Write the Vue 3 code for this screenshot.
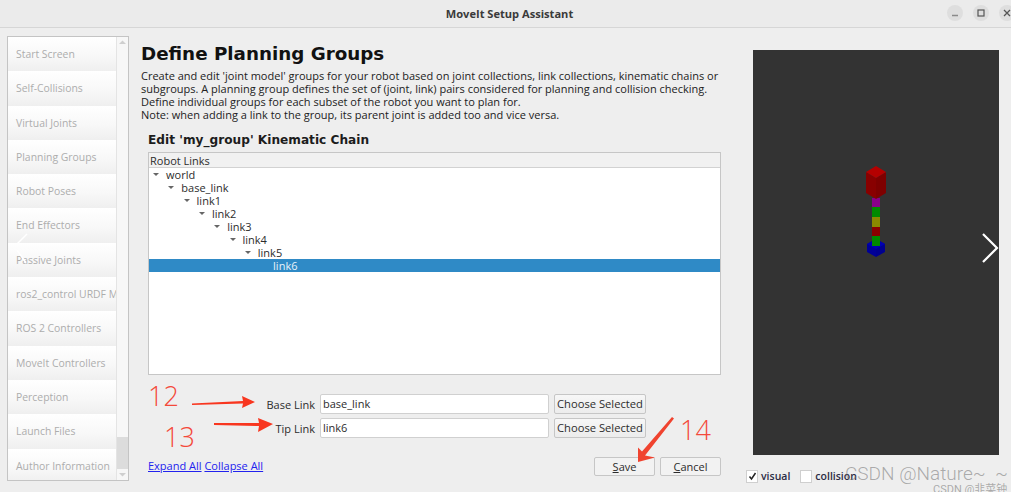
<script setup>
const steps = ['Start Screen','Self-Collisions','Virtual Joints','Planning Groups','Robot Poses','End Effectors','Passive Joints','ros2_control URDF M','ROS 2 Controllers','MoveIt Controllers','Perception','Launch Files','Author Information']
const tree = [
  { name: 'world', depth: 0 }, { name: 'base_link', depth: 1 }, { name: 'link1', depth: 2 }, { name: 'link2', depth: 3 },
  { name: 'link3', depth: 4 }, { name: 'link4', depth: 5 }, { name: 'link5', depth: 6 }, { name: 'link6', depth: 7, selected: true }
]
const fields = [{ label: 'Base Link', value: 'base_link' }, { label: 'Tip Link', value: 'link6' }]
</script>

<template>
  <div class="app">
    <header class="titlebar">
      <span class="wintitle">MoveIt Setup Assistant</span>
      <div class="winbtns">
        <span class="winbtn"><svg width="16" height="16" viewBox="0 0 16 16"><path d="M5 10.500h6" stroke="#8a8a8a" stroke-width="1.500"/></svg></span>
        <span class="winbtn"><svg width="16" height="16" viewBox="0 0 16 16"><rect x="5" y="5" width="6" height="6" fill="none" stroke="#555" stroke-width="1.200"/></svg></span>
        <span class="winbtn"><svg width="16" height="16" viewBox="0 0 16 16"><path d="M5 5l6 6M11 5l-6 6" stroke="#555" stroke-width="1.300"/></svg></span>
      </div>
    </header>
    <div class="body">
      <nav class="sidebar">
        <ul class="steps">
          <li v-for="s in steps" :key="s" class="step">{{ s }}</li>
        </ul>
        <div class="scroll">
          <div class="sarrow"><svg width="7" height="5" viewBox="0 0 7 5"><path d="M0 4l3.500-3.500L7 4z" fill="#cfcfcf"/></svg></div>
          <div class="strack"></div>
          <div class="sthumb"></div>
          <div class="sarrow"><svg width="7" height="5" viewBox="0 0 7 5"><path d="M0 1l3.500 3.500L7 1z" fill="#cfcfcf"/></svg></div>
        </div>
      </nav>
      <main class="main">
        <h1 class="title">Define Planning Groups</h1>
        <p class="desc">Create and edit 'joint model' groups for your robot based on joint collections, link collections, kinematic chains or subgroups. A planning group defines the set of (joint, link) pairs considered for planning and collision checking. Define individual groups for each subset of the robot you want to plan for.<br>Note: when adding a link to the group, its parent joint is added too and vice versa.</p>
        <div class="editor">
          <h2 class="subtitle">Edit 'my_group' Kinematic Chain</h2>
          <div class="treebox">
            <div class="treehead">Robot Links</div>
            <div class="treebody">
              <div v-for="n in tree" :key="n.name" class="row" :class="{ sel: n.selected }" :style="{ paddingLeft: (4 + n.depth * 15.300) + 'px' }">
                <span class="caret" :class="{ hidden: n.selected }"></span>{{ n.name }}
              </div>
            </div>
          </div>
          <div class="fields">
            <div v-for="f in fields" :key="f.label" class="field">
              <label class="flabel">{{ f.label }}</label>
              <div class="input">{{ f.value }}</div>
              <button class="btn choose">Choose Selected</button>
            </div>
          </div>
          <div class="footer">
            <div class="links"><a class="link">Expand All</a> <a class="link">Collapse All</a></div>
            <div class="actions">
              <button class="btn action"><u>S</u>ave</button>
              <button class="btn action"><u>C</u>ancel</button>
            </div>
          </div>
        </div>
      </main>
      <aside class="side">
        <div class="viewer">
          <svg class="robot" width="246" height="405" viewBox="753 50 246 405">
            <path d="M876 239l9 5v8l-9 5z" fill="#000090"/>
            <path d="M876 239l-9 5v8l9 5z" fill="#000098"/>
            <path d="M867 244l9-5 9 5-9 5z" fill="#0000b4"/>
            <rect x="872" y="198" width="8" height="9" fill="#8a008a"/>
            <rect x="872" y="207" width="8" height="10" fill="#008a00"/>
            <rect x="872" y="217" width="8" height="10" fill="#8a8a00"/>
            <rect x="872" y="227" width="8" height="9" fill="#8a0000"/>
            <rect x="872" y="236" width="8" height="10" fill="#008a00"/>
            <path d="M876 178l10-6v21l-10 6z" fill="#7e0000"/>
            <path d="M876 178l-10-6v21l10 6z" fill="#880000"/>
            <path d="M866 172l10-6 10 6-10 6z" fill="#b40000"/>
          </svg>
        </div>
        <div class="checks">
          <label class="check"><span class="box"><svg width="9" height="9" viewBox="0 0 9 9"><path d="M1.500 4.500l2 2.500 4-6" fill="none" stroke="#222" stroke-width="1.500"/></svg></span>visual</label>
          <label class="check"><span class="box"></span>collision</label>
        </div>
      </aside>
    </div>

    <svg class="marks" width="1011" height="492" viewBox="0 0 1011 492">
      <path d="M27 234L17 244" stroke="#fff" stroke-width="1.500" fill="none"/>
      <path d="M17 250l9 13" stroke="#fff" stroke-width="1.500" fill="none"/>
      <path d="M983 234l14 14-14 14" stroke="#fff" stroke-width="2.200" fill="none"/>
      <path d="M192 403.500L243 401l-1-5 13 6-13 6 1-4.500L192 405z" fill="#f8361f"/>
      <path d="M214 423L259 423l-1-5 15 6-15 8 1-6L214 425z" fill="#f8361f"/>
      <path d="M672 417l2 1.500-29 37 10 2-17 4.500 0-14.500 4 4z" fill="#f0432f"/>
    </svg>
    <span class="num n12">12</span>
    <span class="num n13">13</span>
    <span class="num n14">14</span>
    <span class="wm">CSDN @Nature~ &nbsp;~</span>
    <span class="wm2">CSDN @韭菜钟</span>
  </div>
</template>

<style>
html, body { margin: 0; padding: 0; background: #eeeeee; }
</style>

<style scoped>
.app {
  position: relative;
  width: 1011px;
  height: 492px;
  overflow: hidden;
  background: #eeeeee;
  font-family: "Open Sans", "Noto Sans", sans-serif;
  font-size: 11px;
  color: #2c2c2c;
  display: flex;
  flex-direction: column;
}
.titlebar {
  height: 27px;
  flex: none;
  background: #ebebeb;
  border-bottom: 1px solid #d6d6d6;
  display: flex;
  align-items: center;
  justify-content: center;
  padding-left: 8px;
  box-sizing: content-box;
  position: relative;
}
.wintitle { font-weight: 700; font-size: 11.100px; color: #3a3a3a; }
.winbtns { position: absolute; right: -4px; top: 5px; display: flex; gap: 10px; }
.winbtn { width: 16px; height: 16px; border-radius: 50%; background: #dedede; display: flex; }
.body { flex: 1; display: flex; min-height: 0; }
.sidebar {
  width: 120px;
  height: 443px;
  margin: 8px 0 0 7px;
  flex: none;
  display: flex;
  background: #fff;
  border: 1px solid #c4c4c4;
}
.steps { list-style: none; margin: 0; padding: 0; flex: 1; min-width: 0; overflow: hidden; }
.step {
  height: 34.300px;
  line-height: 34.300px;
  padding-left: 8px;
  font-size: 10.400px;
  white-space: nowrap;
  overflow: hidden;
  color: #adadad;
  background: linear-gradient(#ffffff, #f8f8f8 55%, #efefef);
}
.scroll { width: 11px; flex: none; display: flex; flex-direction: column; background: #f7f7f7; border-left: 1px solid #e4e4e4; }
.sarrow { height: 11px; flex: none; display: flex; align-items: center; justify-content: center; }
.strack { flex: 1; }
.sthumb { height: 32px; background: #dcdcdc; }
.main { width: 580px; margin-left: 12px; flex: none; display: flex; flex-direction: column; }
.title { margin: 14px 0 0; font-family: "DejaVu Sans", sans-serif; font-size: 18.300px; line-height: 24px; font-weight: 700; color: #111; }
.desc { margin: 3px 0 0; line-height: 13px; width: 586px; color: #222; }
.editor { padding-left: 7px; margin-top: 11px; display: flex; flex-direction: column; }
.subtitle { margin: 0; font-family: "DejaVu Sans", sans-serif; font-size: 12.150px; line-height: 16px; font-weight: 700; color: #1c1c1c; }
.treebox { margin-top: 4px; height: 223px; background: #fff; border: 1px solid #c6c6c6; box-sizing: border-box; }
.treehead { height: 14px; line-height: 15px; padding-left: 1px; background: #f1f1f1; border-bottom: 1px solid #d2d2d2; }
.row { height: 13px; line-height: 13px; white-space: nowrap; display: flex; align-items: center; }
.row.sel { background: #2f8ac6; color: #e8f2fa; }
.caret { width: 0; height: 0; border: 3px solid transparent; border-top: 3px solid #666; border-bottom: 0; margin-right: 7px; flex: none; }
.caret.hidden { visibility: hidden; }
.fields { margin-top: 19px; display: flex; flex-direction: column; gap: 4px; }
.field { display: flex; align-items: center; height: 20px; }
.flabel { width: 167px; text-align: right; margin-right: 5px; flex: none; }
.input { width: 229px; height: 20px; line-height: 18px; padding-left: 2px; background: #fff; border: 1px solid #d0d0d0; border-radius: 2px; box-sizing: border-box; flex: none; }
.btn { font: inherit; color: #2c2c2c; padding: 0; background: linear-gradient(#f7f7f7, #ececec); border: 1px solid #c6c6c6; border-radius: 2px; box-sizing: border-box; }
.choose { width: 92px; height: 20px; margin-left: 5px; padding-bottom: 2px; font-size: 11.200px; }
.footer { margin-top: 19px; display: flex; align-items: center; justify-content: space-between; }
.links { padding-bottom: 2px; }
.link { color: #2222ee; text-decoration: underline; }
.actions { display: flex; gap: 5px; }
.action { width: 61px; height: 19px; background: #f2f2f2; }
.side { width: 246px; margin-left: 32px; flex: none; }
.viewer { position: relative; width: 246px; height: 405px; margin-top: 22px; background: #333333; }
.robot { position: absolute; inset: 0; }
.checks { display: flex; gap: 10px; margin: 14px 0 0 -7px; }
.check { display: flex; align-items: center; gap: 3px; font-size: 10.500px; font-weight: 600; color: #2c2c44; }
.box { width: 10px; height: 11px; background: #fff; border: 1px solid #cfcfcf; display: flex; align-items: center; justify-content: center; }
.marks { position: absolute; inset: 0; pointer-events: none; }
.num { position: absolute; font-family: "Open Sans", sans-serif; font-weight: 300; font-size: 27px; line-height: 30px; color: #f4493a; }
.n12 { left: 148px; top: 381px; }
.n13 { left: 164px; top: 422px; }
.n14 { left: 680px; top: 415px; }
.wm { position: absolute; left: 845px; top: 461px; font-family: "Roboto", sans-serif; font-weight: 300; font-size: 19px; line-height: 26px; color: rgba(110, 110, 110, 0.55); white-space: nowrap; }
.wm2 { position: absolute; left: 933px; top: 483px; font-family: "Roboto", "Noto Sans CJK SC", sans-serif; font-size: 11px; line-height: 14px; color: rgba(110, 110, 110, 0.55); white-space: nowrap; }
</style>
